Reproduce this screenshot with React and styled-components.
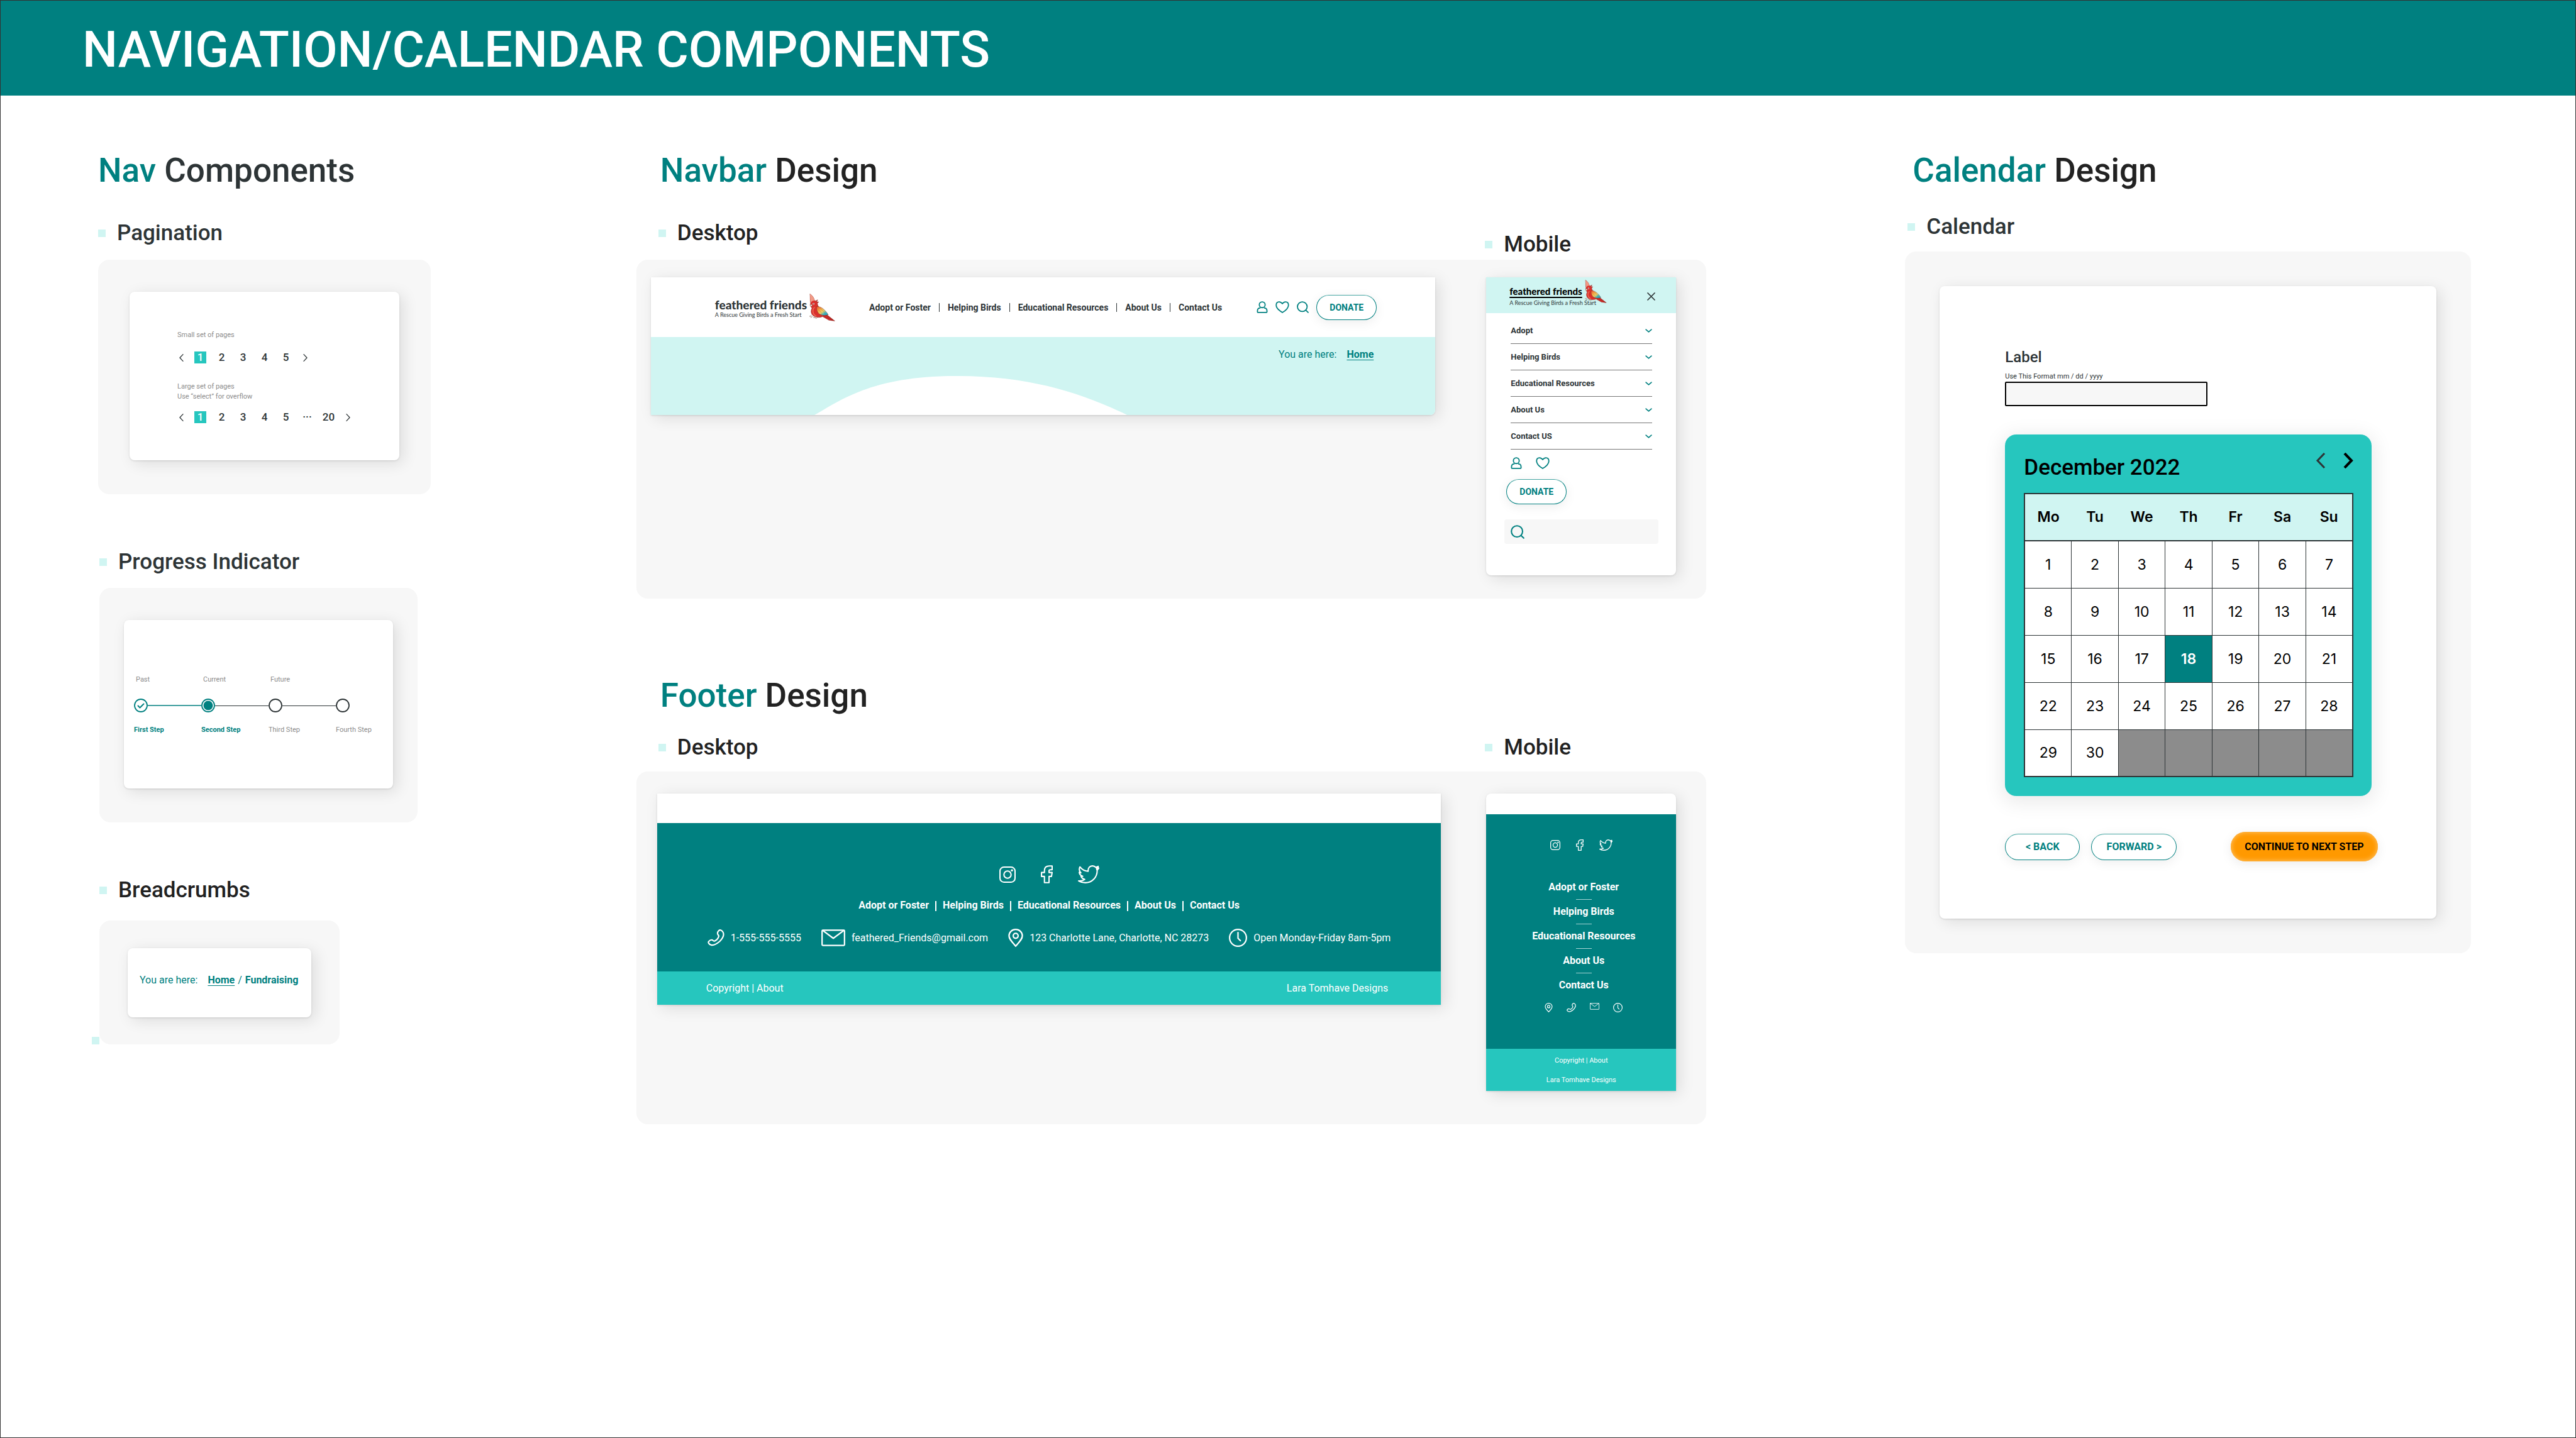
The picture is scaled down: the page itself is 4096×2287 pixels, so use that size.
import React from "react";
import styled, { createGlobalStyle, css } from "styled-components";

const color = {
  teal: "#008080",
  aqua: "#26c6be",
  mint: "#d0f5f2",
  panel: "#f7f7f7",
  ink: "#2d3436",
  black: "#222222",
  muted: "#8c8c8c",
  orange: "#ff9900",
};

const GlobalStyle = createGlobalStyle`
  *, *::before, *::after { box-sizing: border-box; }
  body { margin: 0; background: #fff; color: ${color.ink}; font-family: Roboto, "Liberation Sans", sans-serif; }
  h1, h2, h3, p, ul, ol { margin: 0; padding: 0; }
  ul, ol { list-style: none; }
  a { color: inherit; text-decoration: none; }
  button { border: 0; padding: 0; background: none; color: inherit; font: inherit; cursor: pointer; }
  svg { display: block; flex: none; }
`;

/* ---------- page frame ---------- */

const Page = styled.div`
  min-height: 100vh;
  border: 1px solid #333;
`;

const Banner = styled.header`
  display: flex;
  align-items: center;
  height: 151px;
  padding: 4px 130px 0;
  background: ${color.teal};
`;

const BannerTitle = styled.h1`
  color: #fff;
  font-size: 79px;
  font-weight: 500;
  line-height: 92px;
`;

const Board = styled.main`
  display: grid;
  grid-template-columns: 540fr 1702fr 900fr;
  column-gap: 316px;
  align-items: start;
  padding: 87px 166px 87px 155px;
`;

const Column = styled.div`
  display: flex;
  flex-direction: column;
`;

const SectionTitle = styled.h2`
  margin-left: ${(p) => p.$indent || 0}px;
  margin-bottom: ${(p) => p.$gap}px;
  color: ${(p) => p.$tone || color.black};
  font-size: 53px;
  font-weight: 500;
  line-height: 64px;
  span { color: ${color.teal}; }
`;

const Bullet = styled.span`
  flex: none;
  width: 12px;
  height: 12px;
  background: ${color.mint};
`;

const SubTitle = styled.h3`
  display: flex;
  align-items: center;
  gap: 18px;
  margin-bottom: ${(p) => p.$gap || 0}px;
  color: ${(p) => p.$tone || color.black};
  font-size: 35px;
  font-weight: 500;
  line-height: 42px;
`;

const Block = styled.section`
  & + & { margin: 87px 0 0 2px; }
`;

const Panel = styled.div`
  display: ${(p) => (p.$fit ? "inline-flex" : "flex")};
  align-items: flex-start;
  gap: ${(p) => p.$gap || 0}px;
  padding: ${(p) => p.$pad};
  border-radius: 18px;
  background: ${color.panel};
  vertical-align: top;
`;

const Card = styled.div`
  overflow: hidden;
  border-radius: ${(p) => p.$radius || "8px"};
  background: #fff;
  box-shadow: 6px 5px 24px rgba(0, 0, 0, 0.11), 0 1px 3px rgba(0, 0, 0, 0.12);
`;

/* ---------- icons ---------- */

const Icon = ({ w, h, box, sw, children, stroke = "currentColor" }) => (
  <svg width={w} height={h} viewBox={`0 0 ${box}`} fill="none" stroke={stroke} strokeWidth={sw} strokeLinecap="round" strokeLinejoin="round" aria-hidden="true">
    {children}
  </svg>
);

const UserIcon = () => (
  <Icon w={18} h={19} box="67 74" sw={7}>
    <circle cx="33.500" cy="22" r="18" />
    <path d="M20 42C10 42 4 49 4 60v6q0 4 4 4h51q4 0 4-4v-6c0-11-6-18-16-18" />
  </Icon>
);

const HeartIcon = () => (
  <Icon w={22} h={19} box="84 74" sw={7}>
    <path d="M42 70C20 57 4 42 4 24 4 10 12 4 22 4c9 0 16 5 20 12C46 9 53 4 62 4c10 0 18 6 18 20 0 18-16 33-38 46Z" />
  </Icon>
);

const SearchIcon = ({ size = 19 }) => (
  <Icon w={size} h={size} box="74 74" sw={7}>
    <circle cx="34" cy="34" r="30" />
    <path d="M56 56l14 14" />
  </Icon>
);

const CloseIcon = () => (
  <Icon w={13} h={13} box="13 13" sw={1.7}>
    <path d="M1 1l11 11M12 1L1 12" />
  </Icon>
);

const Chevron = ({ dir = "down", w, h, sw }) => {
  const d = { down: "M2 2L10 9 18 2", left: "M18 2L2 19 18 36", right: "M2 2L18 19 2 36" }[dir];
  const box = dir === "down" ? "20 11" : "20 38";
  return <Icon w={w} h={h} box={box} sw={sw}><path d={d} /></Icon>;
};

const Angle = ({ dir }) => (
  <svg width="16" height="25" viewBox="0 0 16 25" fill="none" stroke={dir === "left" ? color.ink : "#000"} strokeWidth={dir === "left" ? 3 : 4} aria-hidden="true">
    <path d={dir === "left" ? "M14 1L3 12.500 14 24" : "M2 1L13 12.500 2 24"} />
  </svg>
);

const Instagram = ({ size }) => (
  <Icon w={size} h={size} box="100 100" sw={8}>
    <rect x="4" y="4" width="92" height="92" rx="24" />
    <circle cx="50" cy="50" r="22" />
    <circle cx="77" cy="24" r="3" fill="currentColor" />
  </Icon>
);

const Facebook = ({ w, h }) => (
  <Icon w={w} h={h} box="73 110" sw={8}>
    <path d="M69 4H52C32 4 22 14 22 32v12H4v24h18v38h28V68h15l4-24H50V34c0-5 3-7 8-7h11Z" />
  </Icon>
);

const Twitter = ({ w, h }) => (
  <Icon w={w} h={h} box="130 110" sw={8}>
    <path d="M12 10C25 27 42 36 62 37 60 16 72 4 88 4c9 0 16 4 21 9l14-6-4 11 8-1-10 13c1 45-32 76-72 76-17 0-31-4-41-11 15 1 27-2 37-9-11-3-19-9-22-18l10-1C15 62 9 54 8 43l10 3C8 36 6 22 12 10Z" />
    <path d="M112 14l8-3-3 9 5 1-7 6Z" fill="currentColor" />
  </Icon>
);

const Phone = ({ size }) => (
  <Icon w={size} h={size} box="35 35" sw={2.8}>
    <path d="M23 3c3-3 7-1 9 3 3 6-1 13-7 19-6 5-13 9-18 7-3-1-6-4-5-6 1-3 6-5 8-4 2 2 3 3 5 2 4-2 7-5 8-9 1-2-1-3-2-5-1-3 0-5 2-7Z" />
  </Icon>
);

const Mail = ({ w, h }) => (
  <Icon w={w} h={h} box="49 34" sw={2.9}>
    <rect x="1.500" y="1.500" width="46" height="31" rx="1.500" />
    <path d="M3 2l21.500 16L46 2" />
  </Icon>
);

const Pin = ({ w, h }) => (
  <Icon w={w} h={h} box="30 37" sw={2.9}>
    <path d="M15 35.500C7 26 1.500 21 1.500 14.500a13.500 13 0 0 1 27 0C28.500 21 23 26 15 35.500Z" />
    <circle cx="15" cy="14.500" r="5" />
  </Icon>
);

const Clock = ({ size }) => (
  <Icon w={size} h={size} box="38 38" sw={2.9}>
    <circle cx="19" cy="19" r="17.500" />
    <path d="M19 8v12l5 5" />
  </Icon>
);

const Parrot = ({ w, h, id }) => (
  <svg width={w} height={h} viewBox="0 0 156 168" aria-hidden="true">
    <defs>
      <linearGradient id={id} x1="0" y1="0" x2="1" y2="1">
        <stop offset="0" stopColor="#e8452f" />
        <stop offset="0.350" stopColor="#f6b24a" />
        <stop offset="0.550" stopColor="#e8cf6a" />
        <stop offset="0.750" stopColor="#35b5c4" />
        <stop offset="1" stopColor="#1f9fb8" />
      </linearGradient>
    </defs>
    <path d="M14 130l-14 8 12 0-4 8 16-10M40 142l-16 3 14 2 2 6 10-10" fill="none" stroke="#8a6a55" strokeWidth="2" />
    <path d="M3 2C16 10 28 25 31 42l7 2 12-7-6 14 12-1-8 10c2 10 5 17 12 24 18 14 35 30 45 43l49 39-36-5-38-22c-20 9-50 6-64-12-10-16-5-30 0-39C6 80 2 68 7 58 3 40 6 20 3 2Z" fill="#d9302c" stroke="#7c2a22" strokeWidth="2" strokeLinejoin="round" />
    <path d="M3 2C16 10 28 25 31 42 20 41 12 46 8 56 4 40 6 20 3 2Z" fill="#f19a86" />
    <path d="M30 84c-14 14-12 40 10 52" fill="none" stroke="#ef6a55" strokeWidth="6" strokeLinecap="round" />
    <path d="M44 78c24-2 50 18 70 50-20 8-44 4-58-8-10-12-14-26-12-42Z" fill={`url(#${id})`} stroke="#7c3a22" strokeWidth="2" />
    <path d="M62 88c14 8 26 20 34 36M54 98c10 8 18 16 24 26" fill="none" stroke="#7c3a22" strokeWidth="1.500" opacity="0.600" />
    <path d="M84 134l56 28M98 130l48 32" stroke="#8d1d1a" strokeWidth="2.500" />
    <path d="M10 64l-6 8 6 6 8-6Z" fill="#f3ead8" stroke="#5b3b33" strokeWidth="1.500" />
    <circle cx="25" cy="62" r="5" fill="#fff" />
    <circle cx="25" cy="62" r="2.500" fill="#222" />
  </svg>
);

/* ---------- brand ---------- */

const Brand = styled.a`
  display: grid;
  grid-template-columns: auto auto;
  align-items: ${(p) => (p.$compact ? "start" : "center")};
  justify-content: start;
  column-gap: 4px;
`;

const BrandText = styled.span`
  display: flex;
  flex-direction: column;
  padding-top: ${(p) => (p.$compact ? 8 : 4)}px;
  white-space: nowrap;
`;

const BrandName = styled.span`
  color: ${(p) => (p.$compact ? "#000" : color.ink)};
  font-family: Lato, "Liberation Sans", sans-serif;
  font-weight: 900;
  font-size: ${(p) => (p.$compact ? 15 : 19)}px;
  line-height: 20px;
  text-decoration: ${(p) => (p.$compact ? "underline" : "none")};
  text-decoration-thickness: 2px;
  text-underline-offset: 3px;
`;

const BrandLine = styled.span`
  width: 0;
  color: ${color.ink};
  font-family: Lato, "Liberation Sans", sans-serif;
  font-size: 9px;
  line-height: ${(p) => (p.$compact ? 17 : 12)}px;
`;

const Logo = ({ compact }) => (
  <Brand href="#home" $compact={compact}>
    <BrandText $compact={compact}>
      <BrandName $compact={compact}>feathered friends</BrandName>
      <BrandLine $compact={compact}>A Rescue Giving Birds a Fresh Start</BrandLine>
    </BrandText>
    <Parrot w={compact ? 35 : 41} h={compact ? 37 : 44} id={compact ? "wing-compact" : "wing"} />
  </Brand>
);

/* ---------- buttons & breadcrumbs ---------- */

const OutlineButton = styled.button`
  width: ${(p) => p.$width}px;
  height: ${(p) => p.$height || 40}px;
  border: 1px solid ${color.teal};
  border-top-color: #45a5a2;
  border-radius: 21px;
  background: #fff;
  box-shadow: 0 4px 18px rgba(0, 0, 0, 0.07);
  color: ${color.teal};
  font-size: ${(p) => p.$size || 16}px;
  font-weight: 700;
`;

const PrimaryButton = styled.button`
  width: 234px;
  height: 47px;
  border-radius: 24px;
  background: ${color.orange};
  box-shadow: 0 4px 18px rgba(0, 0, 0, 0.08), inset 0 0 6px 2px #ffb84d;
  color: #000;
  font-size: 16px;
  font-weight: 700;
`;

const Crumbs = styled.nav`
  display: flex;
  color: ${color.teal};
  font-size: 16px;
  line-height: 20px;
  white-space: nowrap;
`;

const CrumbLead = styled.span`
  margin-right: 16px;
`;

const Crumb = styled.a`
  font-weight: 700;
  text-decoration: ${(p) => (p.$current ? "none" : "underline")};
  text-decoration-thickness: 1px;
  text-underline-offset: 3px;
`;

const CrumbSlash = styled.span`
  margin: 0 5px;
`;

/* ---------- pagination ---------- */

const PagingCard = styled(Card)`
  width: 429px;
  padding: 61px 76px 59px;
`;

const Caption = styled.p`
  color: ${color.muted};
  font-size: 11px;
  line-height: 16px;
`;

const Pager = styled.ul`
  display: flex;
  align-items: center;
  gap: 15px;
  margin: ${(p) => (p.$last ? "15px 0 0" : "18px 0 29px")};
`;

const PageButton = styled.button`
  display: flex;
  align-items: center;
  justify-content: center;
  width: ${(p) => (p.$arrow ? 12 : 19)}px;
  height: 19px;
  background: ${(p) => (p.$active ? color.aqua : "transparent")};
  color: ${(p) => (p.$active ? "#fff" : color.ink)};
  font-size: 17px;
  font-weight: 500;
  line-height: 19px;
`;

const Paging = ({ pages, last }) => (
  <Pager $last={last}>
    <li><PageButton $arrow aria-label="Previous page"><Chevron dir="left" w={7} h={12} sw={4} /></PageButton></li>
    {pages.map((p) => (
      <li key={p}><PageButton $active={p === "1"}>{p}</PageButton></li>
    ))}
    <li><PageButton $arrow aria-label="Next page"><Chevron dir="right" w={7} h={12} sw={4} /></PageButton></li>
  </Pager>
);

/* ---------- progress ---------- */

const ProgressCard = styled(Card)`
  width: 428px;
  height: 268px;
  padding: 87px 16px 0;
`;

const Steps = styled.ol`
  display: flex;
`;

const Step = styled.li`
  width: 107px;
  &:last-child { width: 66px; }
`;

const StepCaption = styled(Caption)`
  height: 16px;
  margin-bottom: 22px;
  padding-left: 3px;
`;

const Track = styled.div`
  display: flex;
  align-items: center;
  margin-bottom: 20px;
  color: ${(p) => (p.$done ? color.teal : color.ink)};
`;

const Rail = styled.span`
  flex: 1;
  height: ${(p) => (p.$done ? 2 : 1)}px;
  background: ${(p) => (p.$done ? "#3f9f9f" : color.ink)};
`;

const StepLabel = styled.p`
  color: ${(p) => (p.$done ? color.teal : color.muted)};
  font-size: 11px;
  font-weight: ${(p) => (p.$done ? 700 : 400)};
  line-height: 16px;
`;

const Marker = ({ state }) => (
  <Icon w={22} h={22} box="22 22" sw={1.8}>
    <circle cx="11" cy="11" r="10" />
    {state === "past" && <path d="M6.500 11.500l3 3 6-6" strokeWidth="2" />}
    {state === "current" && <circle cx="11" cy="11" r="7.500" fill="currentColor" stroke="none" />}
  </Icon>
);

const steps = [
  { caption: "Past", label: "First Step", state: "past" },
  { caption: "Current", label: "Second Step", state: "current" },
  { caption: "Future", label: "Third Step", state: "future" },
  { caption: "", label: "Fourth Step", state: "future" },
];

const CrumbCard = styled(Card)`
  width: 292px;
  padding: 41px 19px 49px;
`;

const CrumbBlock = styled.div`
  display: flex;
  align-items: flex-end;
  margin-left: -12px;
`;

/* ---------- navbar ---------- */

const SubTitles = styled.div`
  display: flex;
  justify-content: space-between;
  align-items: flex-start;
  min-height: ${(p) => (p.$stagger ? 60 : 42)}px;
  margin-bottom: ${(p) => p.$gap}px;
  padding: 0 48px 0 35px;
  & > :last-child { flex: none; width: 304px; align-self: flex-end; }
`;

const WideCard = styled(Card)`
  flex: 1;
`;

const PhoneCard = styled(Card)`
  flex: none;
  width: 302px;
`;

const NavBar = styled.div`
  display: flex;
  align-items: center;
  height: 95px;
  padding: 0 93px 0 102px;
`;

const NavLinks = styled.ul`
  display: flex;
  justify-content: center;
  gap: ${(p) => p.$gap}px;
  font-size: ${(p) => p.$size}px;
  font-weight: 700;
  line-height: 20px;
  white-space: nowrap;
`;

const Divider = styled.li`
  width: ${(p) => p.$thick || 1}px;
  height: ${(p) => (p.$thick ? 16 : 14)}px;
  margin: 3px 0;
  background: currentColor;
`;

const NavArea = styled.nav`
  flex: none;
  margin-left: 54px;
`;

const Tools = styled.div`
  display: flex;
  align-items: center;
  gap: 12px;
  margin-left: auto;
  color: ${color.teal};
`;

const IconButton = styled.button`
  display: flex;
`;

const Hero = styled.div`
  display: flex;
  flex-direction: column;
  background: ${color.mint};
`;

const HeroCrumbs = styled.div`
  display: flex;
  justify-content: flex-end;
  padding: 18px 98px 24px 0;
`;

const HeroHill = styled.svg`
  width: 100%;
  height: auto;
`;

const linkNames = ["Adopt or Foster", "Helping Birds", "Educational Resources", "About Us", "Contact Us"];

const LinkRow = ({ gap, size, thick }) => (
  <NavLinks $gap={gap} $size={size}>
    {linkNames.map((name, i) => (
      <React.Fragment key={name}>
        {i > 0 && <Divider $thick={thick} aria-hidden="true" />}
        <li><a href="#nav">{name}</a></li>
      </React.Fragment>
    ))}
  </NavLinks>
);

const PhoneHead = styled.div`
  display: flex;
  align-items: flex-start;
  justify-content: space-between;
  height: 57px;
  padding: 4px 33px 0 37px;
  background: ${color.mint};
`;

const CloseButton = styled.button`
  display: flex;
  margin-top: 20px;
`;

const Menu = styled.ul`
  padding: 7px 38px 12px 39px;
`;

const MenuRow = styled.button`
  display: flex;
  align-items: center;
  justify-content: space-between;
  width: 100%;
  height: 42px;
  border-bottom: 1px solid #777;
  color: ${color.ink};
  font-size: 13px;
  font-weight: 700;
  svg { color: ${color.teal}; }
`;

const PhoneTools = styled.div`
  display: flex;
  gap: 22px;
  padding: 0 39px;
  color: ${color.teal};
`;

const PhoneDonate = styled.div`
  padding: 16px 32px 24px;
`;

const SearchBox = styled.label`
  display: flex;
  align-items: center;
  height: 39px;
  margin: 0 28px 50px 29px;
  padding: 0 10px;
  border-radius: 4px;
  background: ${color.panel};
  color: ${color.teal};
`;

const SearchInput = styled.input`
  flex: 1;
  min-width: 0;
  margin-left: 10px;
  border: 0;
  outline: 0;
  background: transparent;
  font: 16px Roboto, "Liberation Sans", sans-serif;
`;

/* ---------- footer ---------- */

const FooterTitle = styled(SectionTitle)`
  margin-top: 122px;
`;

const FooterBody = styled.div`
  display: flex;
  flex-direction: column;
  align-items: center;
  margin-top: ${(p) => (p.$phone ? 33 : 47)}px;
  padding: ${(p) => (p.$phone ? "40px 0 58px" : "67px 0 39px")};
  background: ${color.teal};
  color: #fff;
`;

const Socials = styled.div`
  display: flex;
  align-items: center;
  gap: ${(p) => p.$gap}px;
  margin-bottom: ${(p) => (p.$phone ? 48 : 25)}px;
`;

const SocialLink = styled.a`
  display: flex;
`;

const Contacts = styled.ul`
  display: flex;
  align-items: center;
  gap: 32px;
  margin-top: 25px;
  font-size: 16px;
  line-height: 20px;
  white-space: nowrap;
`;

const Contact = styled.li`
  display: flex;
  align-items: center;
  gap: 10px;
  height: 29px;
`;

const Legal = styled.div`
  display: flex;
  flex-direction: ${(p) => (p.$phone ? "column" : "row")};
  align-items: center;
  justify-content: space-between;
  gap: 15px;
  padding: ${(p) => (p.$phone ? "11px 0 9px" : "17px 84px 16px 78px")};
  background: ${color.aqua};
  color: #fff;
  font-size: ${(p) => (p.$phone ? 11 : 16)}px;
  line-height: ${(p) => (p.$phone ? 16 : 20)}px;
`;

const PhoneFooterNav = styled.div`
  display: flex;
  flex-direction: column;
  align-items: center;
  padding-left: 8px;
`;

const StackedLinks = styled.ul`
  display: flex;
  flex-direction: column;
  align-items: center;
  gap: 9px;
  margin-bottom: 18px;
  font-size: 16px;
  font-weight: 700;
  line-height: 20px;
`;

const StackRule = styled.li`
  width: 25px;
  height: 1px;
  background: #a6d3d3;
`;

const MiniIcons = styled.div`
  display: flex;
  gap: 22px;
`;

/* ---------- calendar ---------- */

const CalendarTitle = styled(SubTitle)`
  padding-left: 4px;
`;

const CalendarCard = styled(Card)`
  flex: 1;
  padding: 99px 93px 91px 104px;
`;

const FieldLabel = styled.label`
  display: block;
  margin-bottom: 9px;
  font-size: 24px;
  font-weight: 500;
  line-height: 28px;
`;

const FieldHint = styled.p`
  font-size: 11px;
  line-height: 16px;
`;

const DateInput = styled.input`
  display: block;
  width: 322px;
  height: 39px;
  padding: 0 10px;
  border: 2px solid #000;
  border-radius: 2px;
  background: ${color.panel};
  font: 16px Roboto, "Liberation Sans", sans-serif;
`;

const Calendar = styled.div`
  margin: 45px 10px 57px 0;
  padding: 29px 29px 30px 30px;
  border-radius: 18px;
  background: ${color.aqua};
  box-shadow: 0 6px 30px 6px rgba(0, 0, 0, 0.08);
`;

const MonthBar = styled.div`
  display: flex;
  align-items: flex-start;
  justify-content: space-between;
  margin-bottom: 16px;
`;

const Month = styled.p`
  color: #000;
  font-size: 35px;
  font-weight: 500;
  line-height: 48px;
`;

const MonthArrows = styled.div`
  display: flex;
  gap: 28px;
`;

const Days = styled.table`
  width: 100%;
  table-layout: fixed;
  border-collapse: collapse;
  border: 2px solid ${color.ink};
  color: #000;
  font-family: Inter, "Liberation Sans", sans-serif;
  font-size: 23px;
`;

const DayHead = styled.th`
  height: 75px;
  padding: 0 0 2px;
  border-bottom: 2px solid ${color.ink};
  background: ${color.mint};
  font-weight: 600;
`;

const dayTone = {
  plain: css`background: #fff;`,
  chosen: css`background: ${color.teal}; color: #fff; font-weight: 600;`,
  empty: css`background: ${color.muted};`,
};

const Day = styled.td`
  height: 75px;
  padding: 0;
  border: 1px solid ${color.ink};
  text-align: center;
  ${(p) => dayTone[p.$tone]}
`;

const Actions = styled.div`
  display: flex;
  align-items: center;
  gap: 18px;
  & > :last-child { margin-left: auto; }
`;

const weekdays = ["Mo", "Tu", "We", "Th", "Fr", "Sa", "Su"];
const weeks = [0, 1, 2, 3, 4].map((w) => weekdays.map((_, d) => w * 7 + d + 1));
const toneOf = (n) => (n > 30 ? "empty" : n === 18 ? "chosen" : "plain");

/* ---------- page ---------- */

export default function App() {
  return (
    <Page>
      <GlobalStyle />
      <Banner><BannerTitle>NAVIGATION/CALENDAR COMPONENTS</BannerTitle></Banner>
      <Board>
        <Column>
          <SectionTitle $gap={47} $tone={color.ink}><span>Nav</span> Components</SectionTitle>
          <Block>
            <SubTitle $gap={21} $tone={color.ink}><Bullet />Pagination</SubTitle>
            <Panel $fit $pad="51px 50px 54px">
              <PagingCard>
                <Caption>Small set of pages</Caption>
                <Paging pages={["1", "2", "3", "4", "5"]} />
                <Caption>Large set of pages</Caption>
                <Caption>Use “select” for overflow</Caption>
                <Paging last pages={["1", "2", "3", "4", "5", "···", "20"]} />
              </PagingCard>
            </Panel>
          </Block>
          <Block>
            <SubTitle $gap={20} $tone={color.ink}><Bullet />Progress Indicator</SubTitle>
            <Panel $fit $pad="51px 39px 54px">
              <ProgressCard>
                <Steps>
                  {steps.map((s, i) => {
                    const reached = s.state !== "future";
                    return (
                      <Step key={s.label}>
                        <StepCaption>{s.caption}</StepCaption>
                        <Track $done={reached}>
                          <Marker state={s.state} />
                          {i < steps.length - 1 && <Rail $done={s.state === "past"} />}
                        </Track>
                        <StepLabel $done={reached}>{s.label}</StepLabel>
                      </Step>
                    );
                  })}
                </Steps>
              </ProgressCard>
            </Panel>
          </Block>
          <Block>
            <SubTitle $gap={27}><Bullet />Breadcrumbs</SubTitle>
            <CrumbBlock>
              <Bullet />
              <Panel $pad="44px 45px 43px">
                <CrumbCard>
                  <Crumbs aria-label="Breadcrumb">
                    <CrumbLead>You are here:</CrumbLead>
                    <Crumb href="#home">Home</Crumb>
                    <CrumbSlash>/</CrumbSlash>
                    <Crumb href="#fundraising" $current>Fundraising</Crumb>
                  </Crumbs>
                </CrumbCard>
              </Panel>
            </CrumbBlock>
          </Block>
        </Column>

        <Column>
          <SectionTitle $gap={47} $indent={38}><span>Navbar</span> Design</SectionTitle>
          <SubTitles $stagger $gap={3}>
            <SubTitle><Bullet />Desktop</SubTitle>
            <SubTitle><Bullet />Mobile</SubTitle>
          </SubTitles>
          <Panel $pad="28px 48px 37px 23px" $gap={81}>
            <WideCard $radius="0 0 8px 0">
              <NavBar>
                <Logo />
                <NavArea><LinkRow gap={13} size={14} /></NavArea>
                <Tools>
                  <IconButton aria-label="Account"><UserIcon /></IconButton>
                  <IconButton aria-label="Favourites"><HeartIcon /></IconButton>
                  <IconButton aria-label="Search"><SearchIcon /></IconButton>
                  <OutlineButton $width={96} $size={14}>DONATE</OutlineButton>
                </Tools>
              </NavBar>
              <Hero>
                <HeroCrumbs>
                  <Crumbs aria-label="Breadcrumb">
                    <CrumbLead>You are here:</CrumbLead>
                    <Crumb href="#home">Home</Crumb>
                  </Crumbs>
                </HeroCrumbs>
                <HeroHill viewBox="0 0 1247 62" aria-hidden="true">
                  <path d="M260 62C300 40 350 0 484 0c116 0 196 25 273 62Z" fill="#fff" />
                </HeroHill>
              </Hero>
            </WideCard>
            <PhoneCard $radius="0 0 8px 8px">
              <PhoneHead>
                <Logo compact />
                <CloseButton aria-label="Close menu"><CloseIcon /></CloseButton>
              </PhoneHead>
              <Menu>
                {["Adopt", "Helping Birds", "Educational Resources", "About Us", "Contact US"].map((name) => (
                  <li key={name}>
                    <MenuRow>{name}<Chevron w={11} h={6} sw={3} /></MenuRow>
                  </li>
                ))}
              </Menu>
              <PhoneTools>
                <IconButton aria-label="Account"><UserIcon /></IconButton>
                <IconButton aria-label="Favourites"><HeartIcon /></IconButton>
              </PhoneTools>
              <PhoneDonate><OutlineButton $width={96} $size={14}>DONATE</OutlineButton></PhoneDonate>
              <SearchBox>
                <SearchIcon size={22} />
                <SearchInput type="search" aria-label="Search" />
              </SearchBox>
            </PhoneCard>
          </Panel>

          <Column as="section">
            <FooterTitle $gap={30} $indent={38}><span>Footer</span> Design</FooterTitle>
            <SubTitles $gap={17}>
              <SubTitle><Bullet />Desktop</SubTitle>
              <SubTitle><Bullet />Mobile</SubTitle>
            </SubTitles>
            <Panel $pad="35px 48px 53px 33px" $gap={72}>
              <WideCard $radius="0">
                <FooterBody>
                  <Socials $gap={40}>
                    <SocialLink href="#instagram" aria-label="Instagram"><Instagram size={26} /></SocialLink>
                    <SocialLink href="#facebook" aria-label="Facebook"><Facebook w={19} h={29} /></SocialLink>
                    <SocialLink href="#twitter" aria-label="Twitter"><Twitter w={34} h={29} /></SocialLink>
                  </Socials>
                  <LinkRow gap={10} size={16} thick={2} />
                  <Contacts>
                    <Contact><Phone size={27} />1-555-555-5555</Contact>
                    <Contact><Mail w={38} h={27} />feathered_Friends@gmail.com</Contact>
                    <Contact><Pin w={24} h={29} />123 Charlotte Lane, Charlotte, NC 28273</Contact>
                    <Contact><Clock size={29} />Open Monday-Friday 8am-5pm</Contact>
                  </Contacts>
                </FooterBody>
                <Legal>
                  <span>Copyright | About</span>
                  <span>Lara Tomhave Designs</span>
                </Legal>
              </WideCard>
              <PhoneCard $radius="8px 8px 0 0">
                <FooterBody $phone>
                  <Socials $gap={25} $phone>
                    <SocialLink href="#instagram" aria-label="Instagram"><Instagram size={16} /></SocialLink>
                    <SocialLink href="#facebook" aria-label="Facebook"><Facebook w={12} h={18} /></SocialLink>
                    <SocialLink href="#twitter" aria-label="Twitter"><Twitter w={21} h={18} /></SocialLink>
                  </Socials>
                  <PhoneFooterNav>
                    <StackedLinks>
                      {linkNames.map((name, i) => (
                        <React.Fragment key={name}>
                          {i > 0 && <StackRule aria-hidden="true" />}
                          <li><a href="#nav">{name}</a></li>
                        </React.Fragment>
                      ))}
                    </StackedLinks>
                    <MiniIcons>
                      <Pin w={13} h={15} />
                      <Phone size={15} />
                      <Mail w={15} h={11} />
                      <Clock size={15} />
                    </MiniIcons>
                  </PhoneFooterNav>
                </FooterBody>
                <Legal $phone>
                  <span>Copyright | About</span>
                  <span>Lara Tomhave Designs</span>
                </Legal>
              </PhoneCard>
            </Panel>
          </Column>
        </Column>

        <Column>
          <SectionTitle $gap={37} $indent={12}><span>Calendar</span> Design</SectionTitle>
          <CalendarTitle $gap={18} $tone={color.ink}><Bullet />Calendar</CalendarTitle>
          <Panel $pad="55px">
            <CalendarCard>
              <FieldLabel htmlFor="date">Label</FieldLabel>
              <FieldHint id="date-hint">Use This Format mm / dd / yyyy</FieldHint>
              <DateInput id="date" type="text" aria-describedby="date-hint" />
              <Calendar>
                <MonthBar>
                  <Month>December 2022</Month>
                  <MonthArrows>
                    <IconButton aria-label="Previous month"><Angle dir="left" /></IconButton>
                    <IconButton aria-label="Next month"><Angle dir="right" /></IconButton>
                  </MonthArrows>
                </MonthBar>
                <Days>
                  <thead>
                    <tr>{weekdays.map((d) => <DayHead key={d} scope="col">{d}</DayHead>)}</tr>
                  </thead>
                  <tbody>
                    {weeks.map((week) => (
                      <tr key={week[0]}>
                        {week.map((n) => <Day key={n} $tone={toneOf(n)}>{n <= 30 ? n : null}</Day>)}
                      </tr>
                    ))}
                  </tbody>
                </Days>
              </Calendar>
              <Actions>
                <OutlineButton $width={119} $height={42}>&lt; BACK</OutlineButton>
                <OutlineButton $width={136} $height={42}>FORWARD &gt;</OutlineButton>
                <PrimaryButton>CONTINUE TO NEXT STEP</PrimaryButton>
              </Actions>
            </CalendarCard>
          </Panel>
        </Column>
      </Board>
    </Page>
  );
}
